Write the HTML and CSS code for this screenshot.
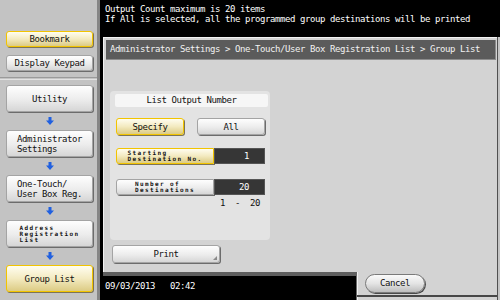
FILE: index.html
```html
<!DOCTYPE html>
<html>
<head>
<meta charset="utf-8">
<link rel="stylesheet" href="styles.css">
</head>
<body>
<div class="screen">
  <aside class="side">
    <div class="side-top">
      <div class="btn yellow short">Bookmark</div>
      <div class="btn short">Display Keypad</div>
    </div>
    <div class="sep"></div>
    <div class="crumbs">
      <div class="btn tall"><span>Utility</span></div>
      <div class="arrow"><svg width="8" height="8" viewBox="0 0 8 8"><path d="M2.5 0h3v3.5h2.5l-4 4.5-4-4.5h2.5z" fill="#2060e0"/></svg></div>
      <div class="btn tall"><span>Administrator<br>Settings</span></div>
      <div class="arrow"><svg width="8" height="8" viewBox="0 0 8 8"><path d="M2.5 0h3v3.5h2.5l-4 4.5-4-4.5h2.5z" fill="#2060e0"/></svg></div>
      <div class="btn tall"><span>One-Touch/<br>User Box Reg.</span></div>
      <div class="arrow"><svg width="8" height="8" viewBox="0 0 8 8"><path d="M2.5 0h3v3.5h2.5l-4 4.5-4-4.5h2.5z" fill="#2060e0"/></svg></div>
      <div class="btn tall"><span class="tiny">Address<br>Registration<br>List</span></div>
      <div class="arrow"><svg width="8" height="8" viewBox="0 0 8 8"><path d="M2.5 0h3v3.5h2.5l-4 4.5-4-4.5h2.5z" fill="#2060e0"/></svg></div>
      <div class="btn tall yellow"><span>Group List</span></div>
    </div>
  </aside>
  <main class="main">
    <div class="msg">Output Count maximum is 20 items<br>If All is selected, all the programmed group destinations will be printed</div>
    <div class="panel">
      <div class="path">Administrator Settings &gt; One-Touch/User Box Registration List &gt; Group List</div>
      <div class="content">
        <div class="card">
          <div class="card-title">List Output Number</div>
          <div class="choice">
            <div class="btn yellow opt">Specify</div>
            <div class="btn opt">All</div>
          </div>
          <div class="field first">
            <div class="btn yellow label"><span class="tiny">Starting<br>Destination No.</span></div>
            <div class="value">1</div>
          </div>
          <div class="field second">
            <div class="btn label"><span class="tiny">Number of<br>Destinations</span></div>
            <div class="value">20</div>
          </div>
          <div class="range"><span>1</span><span>-</span><span>20</span></div>
        </div>
        <div class="btn print">Print<span class="corner"></span></div>
      </div>
      <div class="foot-row">
        <div class="status">09/03/2013   02:42</div>
        <div class="tail"><div class="cancel">Cancel</div></div>
      </div>
    </div>
  </main>
</div>
</body>
</html>
```
FILE: styles.css
```css
html, body {
  margin: 0;
  padding: 0;
}
body {
  width: 500px;
  height: 300px;
  overflow: hidden;
  font-family: "DejaVu Sans Mono", "Liberation Mono", monospace;
  font-size: 9px;
  letter-spacing: -0.42px;
  color: #111;
}
.screen {
  display: flex;
  width: 500px;
  height: 300px;
}

/* sidebar */
.side {
  width: 97px;
  border-right: 3px solid #858585;
  background: #c3c3c3;
  display: flex;
  flex-direction: column;
}
.side-top {
  display: flex;
  flex-direction: column;
  gap: 8px;
  padding: 31px 0 0 6px;
}
.sep {
  margin-top: 6px;
  height: 1px;
  border-top: 1px solid #9a9a9a;
  border-bottom: 1px solid #e2e2e2;
}
.crumbs {
  display: flex;
  flex-direction: column;
  padding: 5px 0 0 6px;
}
.btn {
  box-sizing: border-box;
  display: flex;
  align-items: center;
  justify-content: center;
  background: linear-gradient(#fefefe, #ececec 55%, #d6d6d6);
  border: 1px solid #a4a4a4;
  border-radius: 3px;
  box-shadow: 1px 1px 0 #6c6c6c;
  white-space: nowrap;
}
.btn.yellow {
  background: linear-gradient(#fffdf0, #f3eac0 50%, #dccb84);
  border: 1px solid #f2c400;
  box-shadow: 1px 1px 0 #7d7456;
}
.short {
  width: 87px;
  height: 16px;
}
.tall {
  width: 87px;
  height: 27px;
  line-height: 10px;
}
.tall span {
  display: inline-block;
  text-align: left;
}
.tall span.tiny {
  line-height: 6px;
}
.tiny {
  font-size: 6px;
  letter-spacing: 1.39px;
  line-height: 6px;
  display: inline-block;
  text-align: left;
  font-weight: bold;
}
.arrow {
  width: 87px;
  height: 18px;
  display: flex;
  align-items: center;
  justify-content: center;
}

/* main */
.main {
  width: 400px;
  display: flex;
  flex-direction: column;
  background: #c4c4c4;
}
.msg {
  box-sizing: border-box;
  height: 37px;
  background: #000;
  color: #fff;
  padding: 4px 0 0 5px;
  line-height: 10px;
  white-space: nowrap;
}
.panel {
  flex: 1;
  display: flex;
  flex-direction: column;
  background: #d3d3d3;
  border-left: 3px solid #000;
  border-right: 1px solid #505050;
  margin-right: 2px;
  box-shadow: inset 1px 1px 0 #f2f2f2;
}
.path {
  box-sizing: border-box;
  margin: 3px 1px 0 3px;
  height: 20px;
  background: #5b5b5b;
  border-right: 1px solid #8c8c8c;
  border-bottom: 1px solid #8c8c8c;
  color: #f2f2f2;
  padding-left: 4px;
  line-height: 19px;
  white-space: nowrap;
}
.content {
  flex: 1;
  padding: 31px 0 0 7px;
}
.card {
  box-sizing: border-box;
  width: 160px;
  height: 149px;
  background: #e3e3e3;
  border-radius: 4px;
  padding-top: 3px;
}
.card-title {
  margin: 0 2px 0 5px;
  height: 13px;
  background: #f6f6f6;
  border-radius: 2px;
  text-align: center;
  line-height: 13px;
}
.choice {
  display: flex;
  justify-content: space-between;
  margin: 11px 5px 0 6px;
}
.opt {
  width: 68px;
  height: 17px;
}
.field {
  display: flex;
  margin: 0 5px 0 6px;
  height: 16px;
}
.field.first {
  margin-top: 13px;
}
.field.second {
  margin-top: 15px;
}
.label {
  width: 98px;
  height: 16px;
  border-radius: 3px 0 0 3px;
}
.value {
  flex: 1;
  background: #363636;
  border: 1px solid #555;
  color: #fff;
  text-align: right;
  padding-right: 15px;
  line-height: 14px;
}
.range {
  display: flex;
  justify-content: flex-end;
  gap: 10px;
  margin: 3px 10px 0 0;
  line-height: 10px;
}
.print {
  position: relative;
  margin: 5px 0 0 2px;
  width: 108px;
  height: 18px;
}
.corner {
  position: absolute;
  right: 2px;
  bottom: 2px;
  width: 0;
  height: 0;
  border-left: 4px solid transparent;
  border-bottom: 4px solid #8a8a8a;
}
.foot-row {
  display: flex;
  height: 28px;
}
.status {
  box-sizing: border-box;
  width: 254px;
  background: #000;
  color: #fff;
  border-top: 4px solid #5e5e5e;
  border-right: 1px solid #6a6a6a;
  box-shadow: 1px 0 0 #f0f0f0;
  padding: 5px 0 0 2px;
  white-space: pre;
  line-height: 10px;
}
.tail {
  flex: 1;
  margin-bottom: 3px;
  border-bottom: 2px solid #474747;
  padding: 2px 0 0 8px;
}
.cancel {
  box-sizing: border-box;
  width: 60px;
  height: 19px;
  border-radius: 10px;
  background: linear-gradient(#fafafa, #e4e4e4 50%, #bdbdbd);
  border: 1px solid #7a7a7a;
  box-shadow: 1px 1px 0 #4a4a4a;
  text-align: center;
  line-height: 17px;
}
```
